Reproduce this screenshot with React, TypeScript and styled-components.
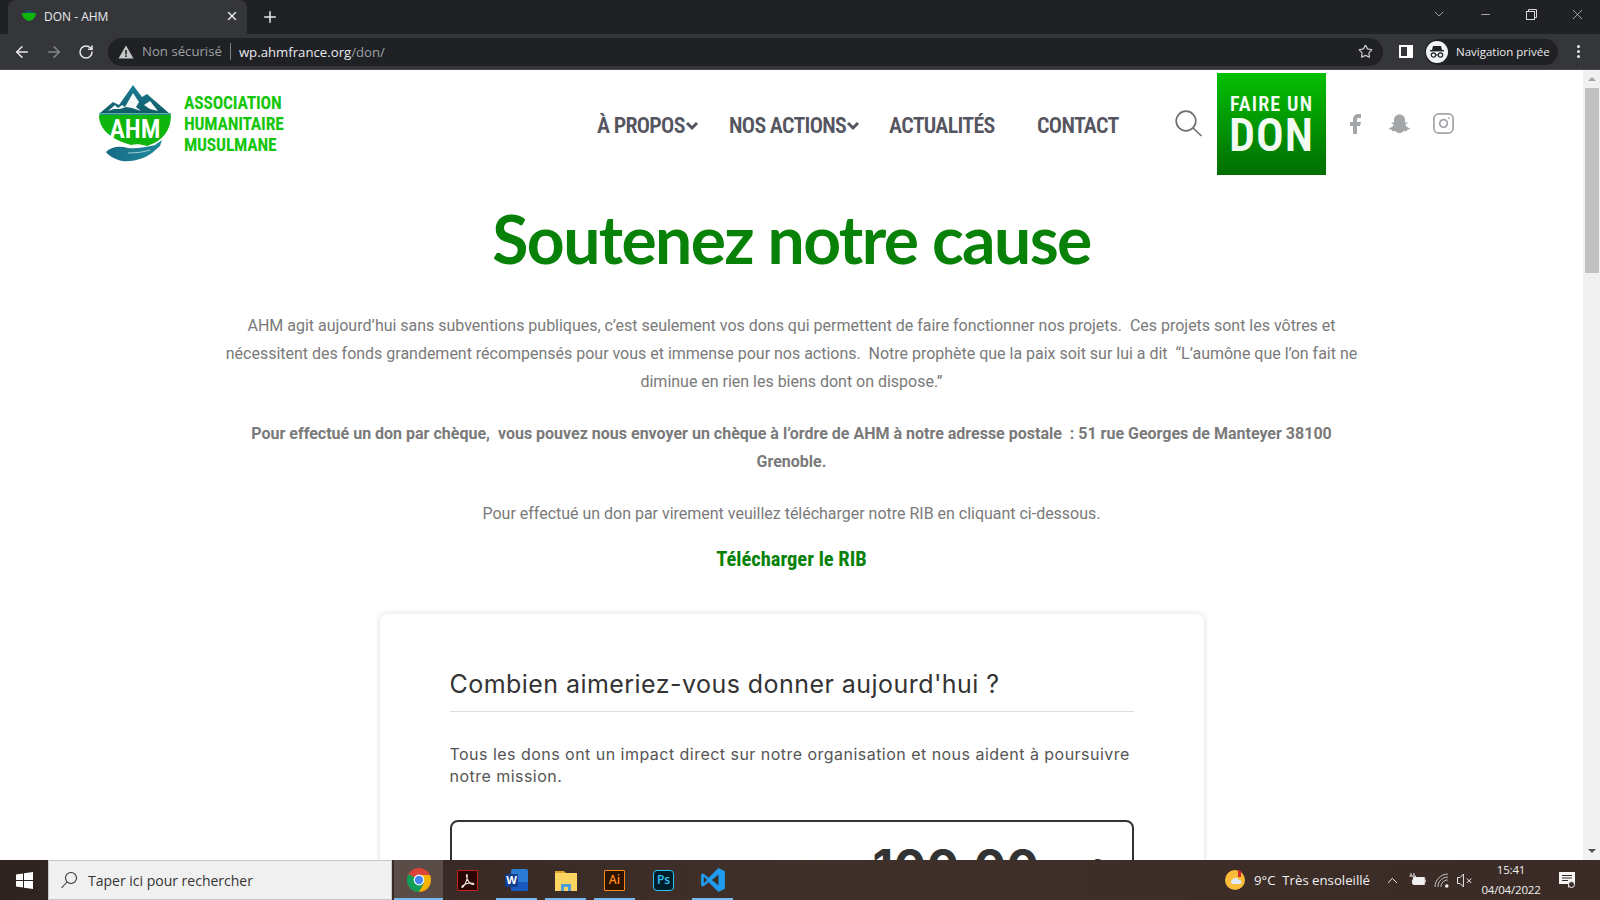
import React from 'react';
import styled, { createGlobalStyle } from 'styled-components';
import { ArrowLeft, ArrowRight, RotateCw, Star, X, Plus, ChevronDown, Minus, Facebook, Instagram, ChevronUp } from 'lucide-react';

const GlobalStyle = createGlobalStyle`
  html, body { margin: 0; padding: 0; height: 100%; overflow: hidden; background: #fff; }
  * { box-sizing: border-box; }
`;

const Screen = styled.div`
  width: 1600px;
  height: 900px;
  display: flex;
  flex-direction: column;
  overflow: hidden;
  font-family: Roboto, "Liberation Sans", sans-serif;
`;

const TabStrip = styled.div`
  height: 34px;
  flex: none;
  display: flex;
  background: #202124;
  padding-left: 8px;
  color: #e8eaed;
`;

const Tab = styled.div`
  width: 239px;
  height: 34px;
  background: #35363a;
  border-radius: 8px 8px 0 0;
  display: flex;
  align-items: center;
  padding: 0 8px 2px 13px;
  font: 12px "Open Sans", sans-serif;
  color: #e8eaed;
`;

const TabTitle = styled.span`
  flex: 1;
  margin-left: 7px;
`;

const NewTab = styled.div`
  margin: 0 0 0 14px;
  display: flex;
  align-items: center;
`;

const WindowControls = styled.div`
  margin-left: auto;
  display: flex;
  align-items: flex-start;
  padding-top: 6px;
  color: #d8d9db;
`;

const WindowButton = styled.div`
  width: 46px;
  height: 16px;
  display: flex;
  align-items: center;
  justify-content: center;
`;

const Toolbar = styled.div`
  height: 36px;
  flex: none;
  background: #35363a;
  display: flex;
  align-items: center;
  padding: 0 10px 0 6px;
  border-bottom: 1px solid #4a4b4f;
  color: #e8eaed;
`;

const NavIcon = styled.div<{ $dim?: boolean }>`
  width: 32px;
  display: flex;
  justify-content: center;
  color: ${(p) => (p.$dim ? '#85868a' : '#e8eaed')};
`;

const Omnibox = styled.div`
  width: 1275px;
  height: 28px;
  margin-left: 6px;
  border-radius: 14px;
  background: #202124;
  display: flex;
  align-items: center;
  padding: 0 10px 0 10px;
  font: 13.2px "Open Sans", sans-serif;
`;

const InsecureLabel = styled.span`
  color: #9aa0a6;
  margin-left: 8px;
  padding-right: 8px;
  border-right: 1px solid #7d7e82;
  line-height: 17px;
`;

const UrlHost = styled.span`
  color: #e8eaed;
  margin-left: 8px;
`;

const UrlPath = styled.span`
  color: #9aa0a6;
`;

const UrlSpacer = styled.span`
  flex: 1;
`;

const SidePanelIcon = styled.div`
  width: 14px;
  height: 13px;
  margin-left: 16px;
  border: 2px solid #fff;
  border-right-width: 6px;
`;

const Profile = styled.div`
  width: 133px;
  height: 26px;
  margin-left: 12px;
  border-radius: 13px;
  background: #202124;
  display: flex;
  align-items: center;
  padding-left: 1px;
  font: 11.5px "Open Sans", sans-serif;
  color: #e8eaed;
`;

const ProfileBadge = styled.div`
  width: 22px;
  height: 22px;
  border-radius: 50%;
  background: #f1f3f4;
  display: flex;
  align-items: center;
  justify-content: center;
  margin-right: 8px;
`;

const MenuDots = styled.div`
  margin-left: 19px;
  display: flex;
  flex-direction: column;
  gap: 2px;
`;

const Dot = styled.span`
  width: 3px;
  height: 3px;
  border-radius: 50%;
  background: #e8eaed;
`;

const Viewport = styled.div`
  flex: 1;
  min-height: 0;
  display: flex;
  overflow: hidden;
  background: #fff;
`;

const Page = styled.main`
  flex: 1;
  min-width: 0;
  display: flex;
  flex-direction: column;
  align-items: center;
  overflow: hidden;
`;

const ScrollBar = styled.div`
  width: 17px;
  flex: none;
  background: #f1f1f1;
  display: flex;
  flex-direction: column;
  align-items: center;
`;

const ScrollArrow = styled.div<{ $down?: boolean }>`
  height: 18px;
  flex: none;
  display: flex;
  align-items: center;
  &::before {
    content: '';
    border-left: 4px solid transparent;
    border-right: 4px solid transparent;
    ${(p) => (p.$down ? 'border-top: 4px solid #505050;' : 'border-bottom: 4px solid #a3a3a3;')}
  }
`;

const ScrollThumb = styled.div`
  width: 14px;
  height: 185px;
  margin-left: 1px;
  background: #c1c1c1;
`;

const ScrollRest = styled.div`
  flex: 1;
`;

const Header = styled.header`
  width: 100%;
  height: 107px;
  flex: none;
  display: flex;
  align-items: flex-start;
  padding-left: 98px;
`;

const Logo = styled.div`
  display: flex;
  align-items: center;
  width: 499px;
  height: 80px;
  margin-top: 14px;
`;

const LogoWords = styled.div`
  margin-left: 12px;
  font: 700 17.5px/21px Roboto, sans-serif;
  font-stretch: 75%;
  letter-spacing: -0.2px;
  color: #16c60c;
`;

const Nav = styled.nav`
  display: flex;
  align-items: center;
  height: 105px;
  padding-top: 6px;
  color: #55555f;
  font: 600 22px Roboto, sans-serif;
  font-stretch: 75%;
  letter-spacing: -0.7px;
`;

const NavItem = styled.a<{ $width: number }>`
  width: ${(p) => p.$width}px;
  display: flex;
  align-items: center;
  white-space: nowrap;
`;

const SearchBox = styled.div`
  height: 105px;
  display: flex;
  align-items: center;
  padding: 2px 0 0 2px;
  width: 44px;
`;

const DonateButton = styled.a`
  width: 109px;
  height: 102px;
  margin-top: 3px;
  background: linear-gradient(#04bf04, #016e01);
  color: #f3fbf3;
  display: flex;
  flex-direction: column;
  align-items: center;
  font-family: Roboto, sans-serif;
  font-stretch: 75%;
  font-weight: 600;
`;

const DonateTop = styled.span`
  font-size: 20px;
  line-height: 24px;
  margin-top: 19px;
  letter-spacing: 1.15px;
`;

const DonateBig = styled.span`
  font-size: 46px;
  line-height: 46px;
  margin-top: -4px;
  letter-spacing: 1px;
`;

const Socials = styled.div`
  height: 105px;
  display: flex;
  align-items: center;
  padding-top: 2px;
  margin-left: 17px;
  gap: 21px;
  color: #a3a6a9;
`;

const Title = styled.h1`
  margin: 24px 0 35px;
  font: 700 66px/76px Lato, sans-serif;
  letter-spacing: -1.6px;
  color: #078107;
`;

const Lead = styled.p<{ $strong?: boolean }>`
  width: 1140px;
  margin: 0 0 24px;
  text-align: center;
  font-size: 16px;
  line-height: 28px;
  color: #7a7a7a;
  font-weight: ${(p) => (p.$strong ? 700 : 400)};
  letter-spacing: ${(p) => (p.$strong ? '0' : '-0.014px')};
`;

const RibLink = styled.a`
  margin: -7px 0 41px;
  font: 700 20.5px/28px Roboto, sans-serif;
  font-stretch: 75%;
  color: #078107;
`;

const Card = styled.section`
  width: 824px;
  flex: none;
  background: #fff;
  border-radius: 8px;
  box-shadow: 0 0 6px rgba(0, 0, 0, 0.14);
  padding: 52px 70px 40px;
`;

const CardTitle = styled.h2`
  margin: 0;
  padding-bottom: 9px;
  border-bottom: 1px solid #ddd;
  font: 400 25px/36px Inter, sans-serif;
  letter-spacing: 0.45px;
  color: #333;
`;

const CardText = styled.p`
  margin: 31px 0 33px;
  font: 400 16px/22px Inter, sans-serif;
  letter-spacing: 0.47px;
  color: #555;
`;

const AmountBox = styled.div`
  height: 84px;
  border: 2px solid #333;
  border-radius: 8px;
  display: flex;
  justify-content: flex-end;
  padding: 17px 28px 0 0;
  font: 700 48px/56px Inter, sans-serif;
  letter-spacing: 0.6px;
  color: #333;
`;

const Currency = styled.span`
  font-size: 20px;
  font-weight: 400;
  margin-left: 50px;
  line-height: 56px;
`;

const Taskbar = styled.footer`
  height: 40px;
  flex: none;
  display: flex;
  align-items: center;
  background: linear-gradient(90deg, #2f2320, #40302a 50%, #3a2b26);
  color: #fff;
`;

const StartButton = styled.div`
  width: 48px;
  display: flex;
  justify-content: center;
`;

const SearchField = styled.div`
  width: 344px;
  height: 40px;
  background: #f0f0f0;
  border: 1px solid #c8c8c8;
  display: flex;
  align-items: center;
  padding-left: 11px;
  color: #333;
  font: 14px "Open Sans", sans-serif;
`;

const SearchHint = styled.span`
  margin-left: 10px;
`;

const TaskIcons = styled.div`
  display: flex;
  margin-left: 2px;
  height: 40px;
`;

const TaskSlot = styled.div<{ $active?: boolean; $open?: boolean }>`
  position: relative;
  width: 49px;
  height: 40px;
  display: flex;
  align-items: center;
  justify-content: center;
  background: ${(p) => (p.$active ? '#5a4d48' : 'transparent')};
  &::after {
    content: '';
    display: ${(p) => (p.$open ? 'block' : 'none')};
    position: absolute;
    left: ${(p) => (p.$active ? '0' : '4px')};
    right: ${(p) => (p.$active ? '0' : '4px')};
    bottom: 0;
    height: 2px;
    background: #76b9ed;
  }
`;

const AppTile = styled.div<{ $bg: string; $fg: string; $round?: boolean }>`
  width: 21px;
  height: 21px;
  border-radius: ${(p) => (p.$round ? '4px' : '1px')};
  background: ${(p) => p.$bg};
  border: 1.5px solid ${(p) => p.$fg};
  color: ${(p) => p.$fg};
  font: 600 12px/18px "Open Sans", sans-serif;
  text-align: center;
  display: flex;
  align-items: center;
  justify-content: center;
`;

const Tray = styled.div`
  margin-left: auto;
  display: flex;
  align-items: center;
  padding-right: 15px;
  font: 13.2px "Open Sans", sans-serif;
  color: #f1f1f1;
`;

const Weather = styled.span`
  margin-left: 8px;
  width: 130px;
  white-space: nowrap;
`;

const TrayIcons = styled.div`
  display: flex;
  align-items: center;
  gap: 8px;
  width: 89px;
`;

const Clock = styled.div`
  width: 76px;
  text-align: center;
  font-size: 11.5px;
  line-height: 20px;
  letter-spacing: -0.2px;
`;

const Notify = styled.div`
  width: 36px;
  display: flex;
  justify-content: center;
`;

const Chevron = () => (
  <svg width="14" height="10" viewBox="0 0 14 10" fill="none" stroke="#55555f" strokeWidth="3">
    <path d="M2 2l5 5 5-5" />
  </svg>
);

const MagnifierIcon = () => (
  <svg width="28" height="27" viewBox="0 0 28 27" fill="none" stroke="#707070" strokeWidth="1.7">
    <circle cx="11" cy="11" r="9.800" />
    <path d="M18 18l8.500 8" />
  </svg>
);

const TaskSearchIcon = () => (
  <svg width="18" height="18" viewBox="0 0 18 18" fill="none" stroke="#333" strokeWidth="1.100">
    <circle cx="11" cy="7" r="5.500" />
    <path d="M7 11l-5.500 6" />
  </svg>
);

const LogoMark = () => (
  <svg width="74" height="80" viewBox="0 0 74 80">
    <defs>
      <linearGradient id="peak" x1="0" y1="0" x2="0" y2="1">
        <stop offset="0" stopColor="#1d7f99" />
        <stop offset="1" stopColor="#0f5a63" />
      </linearGradient>
      <linearGradient id="hand" x1="0" y1="0" x2="1" y2="0">
        <stop offset="0" stopColor="#176a86" />
        <stop offset="1" stopColor="#1f8a9a" />
      </linearGradient>
    </defs>
    <path d="M2 29L15 18l6 3 14-20 9 12 5-3 23 20 1 1H2z" fill="url(#peak)" />
    <path d="M10 27l7-6 3 3 4-3 3 2 8-14 6 9-3 5 5 4-9-3-6-1-6 2-6 0z" fill="#fff" opacity=".95" />
    <path d="M46 21l6-4 8 10-8-2z" fill="#fff" />
    <rect x="1" y="29" width="72" height="1.500" fill="#4fb3a5" />
    <path d="M1 31h72c0 15-8 26-24 31-6-2-12-2-16-1C12 55 1 45 1 31z" fill="#0db50d" />
    <text x="37" y="54" textAnchor="middle" fontFamily="Roboto, sans-serif" fontWeight="600" fontSize="26" fill="#fff" style={{ fontStretch: '75%' }}>AHM</text>
    <path d="M8 68c6-6 14-6 22-4 8 1 18-1 27-3l7-5-2 6-8 7c-8 6-20 9-30 8-8-2-13-5-16-9z" fill="url(#hand)" />
    <path d="M30 69c8 0 16-1 22-3" fill="none" stroke="#bfe3e6" strokeWidth=".8" />
  </svg>
);

const Snapchat = () => (
  <svg width="23" height="22" viewBox="0 0 24 24" fill="#a3a6a9">
    <path d="M12 1.500c3.600 0 6 2.600 6 6v3l2-.5c.8 0 1 .9.4 1.300l-2 1.200c.5 1.900 2.200 3.300 4.600 4 .5.200.4.900-.1 1.100l-2.400.7-.5 1.500-2.400-.2c-1.700 0-2.600 2.400-5.600 2.400s-3.900-2.400-5.600-2.400l-2.400.2-.5-1.500-2.400-.7c-.5-.2-.6-.9-.1-1.100 2.400-.7 4.100-2.100 4.600-4l-2-1.200c-.6-.4-.4-1.300.4-1.300l2 .5v-3c0-3.400 2.400-6 6-6z" />
  </svg>
);

const Incognito = () => (
  <svg width="18" height="18" viewBox="0 0 18 18" fill="#202124">
    <path d="M5 3h8l1 4H4z" />
    <rect x="2" y="7" width="14" height="1.400" />
    <circle cx="5.500" cy="12" r="2.200" fill="none" stroke="#202124" strokeWidth="1.200" />
    <circle cx="12.500" cy="12" r="2.200" fill="none" stroke="#202124" strokeWidth="1.200" />
    <path d="M7.500 11.500h3v1h-3z" />
  </svg>
);

const WarningIcon = () => (
  <svg width="16" height="14" viewBox="0 0 16 14">
    <path d="M8 0.500L15.500 13.500H0.500z" fill="#c4c7c5" />
    <path d="M7.200 5h1.600v4.500H7.200zM7.200 10.300h1.600v1.600H7.200z" fill="#202124" />
  </svg>
);

const WindowsLogo = () => (
  <svg width="17" height="17" viewBox="0 0 17 17" fill="#fff">
    <path d="M0 2.500l7-1v6.500H0zM8 1.300L17 0v8H8zM0 9h7v6.500l-7-1zM8 9h9v8l-9-1.300z" />
  </svg>
);

const ChromeLogo = () => (
  <svg width="24" height="24" viewBox="0 0 24 24">
    <circle cx="12" cy="12" r="12" fill="#db4437" />
    <path d="M12 12L1.600 6A12 12 0 0 0 12 24l5.200-9z" fill="#0f9d58" />
    <path d="M12 7h10.900A12 12 0 0 1 12 24l5-9z" fill="#f4b400" />
    <circle cx="12" cy="12" r="5.400" fill="#fff" />
    <circle cx="12" cy="12" r="4.200" fill="#4285f4" />
  </svg>
);

const AcrobatGlyph = () => (
  <svg width="15" height="15" viewBox="0 0 15 15" fill="none" stroke="#f3e6e4" strokeWidth="1.100">
    <path d="M7 1.500c-.8 0-.6 2.500.5 5s3 4.500 5.500 5c1 .2 1.200-.9 0-1.200-3.500-.6-8 .4-10.500 2.700-1.300 1.200-.3 1.800.6.800C5.500 11.500 8 5 7 1.500z" />
  </svg>
);

const WordLogo = () => (
  <svg width="24" height="24" viewBox="0 0 24 24">
    <rect x="6" y="1" width="17" height="22" rx="2" fill="#2b7cd3" />
    <rect x="6" y="14" width="17" height="9" rx="1" fill="#185abd" />
    <rect x="0" y="6" width="13" height="13" rx="1" fill="#103f91" />
    <text x="6.500" y="16" textAnchor="middle" fontSize="11" fontWeight="700" fill="#fff" fontFamily="Open Sans, sans-serif">W</text>
  </svg>
);

const FolderLogo = () => (
  <svg width="24" height="24" viewBox="0 0 24 24">
    <path d="M1 3h9l2 2H1z" fill="#e0a526" />
    <rect x="1" y="5" width="22" height="18" fill="#fcd462" />
    <rect x="7" y="16" width="10" height="7" fill="#4a9fd8" />
    <rect x="10" y="19" width="4" height="4" fill="#fcd462" />
  </svg>
);

const VsCodeLogo = () => (
  <svg width="26" height="26" viewBox="0 0 24 24">
    <path d="M17 1l6 3v16l-6 3-9-9-5 4-2-1V7l2-1 5 4z" fill="#1f9cf0" />
    <path d="M17 7l-6 5 6 5z" fill="#3a2c26" />
    <path d="M3.500 9l3 3-3 3z" fill="#3a2c26" />
  </svg>
);

const WeatherIcon = () => (
  <svg width="22" height="22" viewBox="0 0 22 22">
    <circle cx="11" cy="11" r="10" fill="#f9bd3a" />
    <path d="M14 1l3 1 0 6-3 0z" fill="#d9272e" />
    <path d="M8 15a3 3 0 0 1 1-5 3.500 3.500 0 0 1 6 1 2 2 0 0 1 1 4z" fill="#dfe9f3" />
  </svg>
);

const BatteryPlug = () => (
  <svg width="17" height="14" viewBox="0 0 17 14" fill="none" stroke="#f1f1f1" strokeWidth="1">
    <rect x="4.500" y="4.500" width="11" height="7" fill="#f1f1f1" />
    <path d="M16.500 6.500v3" />
    <path d="M2 0v3M5 0v3M0.500 3h6v1.500L3.500 7v4" />
  </svg>
);

const WifiFan = () => (
  <svg width="16" height="15" viewBox="0 0 16 15" fill="none" stroke="#c9c6c4" strokeWidth="1">
    <path d="M1 14C1 7 7 1 14 1M4 14c0-5.500 4.500-10 10-10M7 14c0-3.900 3.100-7 7-7" />
    <circle cx="13" cy="13" r="1.800" fill="#f1f1f1" stroke="none" />
  </svg>
);

const MutedSpeaker = () => (
  <svg width="16" height="15" viewBox="0 0 16 15" fill="none" stroke="#f1f1f1" strokeWidth="1">
    <path d="M6.500 1v13L3 10.500H.5v-6H3z" />
    <path d="M10 5.500l4.500 4.500M14.500 5.500L10 10" />
  </svg>
);

const NotifyBubble = () => (
  <svg width="18" height="18" viewBox="0 0 18 18">
    <path d="M1 1h16v12h-4l-3 4v-4H1z" fill="#f4f4f4" />
    <path d="M4 4.500h10M4 7h10M4 9.500h6" stroke="#3a2b26" strokeWidth="1" />
    <circle cx="13.500" cy="13.500" r="3" fill="#3a2b26" stroke="#f4f4f4" />
  </svg>
);

export default function App() {
  return (
    <Screen>
      <GlobalStyle />
      <TabStrip>
        <Tab>
          <svg width="16" height="12" viewBox="0 0 16 12">
            <path d="M1 3h14c0 4-3 7-7 8-4-1-7-4-7-8z" fill="#0db50d" />
            <path d="M3 3l5-3 5 3z" fill="#0f5a63" />
          </svg>
          <TabTitle>DON - AHM</TabTitle>
          <X size={14} strokeWidth={2.4} />
        </Tab>
        <NewTab>
          <Plus size={18} strokeWidth={2} />
        </NewTab>
        <WindowControls>
          <WindowButton>
            <ChevronDown size={16} strokeWidth={1} />
          </WindowButton>
          <WindowButton>
            <Minus size={13} strokeWidth={1.4} />
          </WindowButton>
          <WindowButton>
            <svg width="11" height="11" viewBox="0 0 11 11" fill="none" stroke="#d8d9db">
              <rect x="0.500" y="2.500" width="8" height="8" />
              <path d="M2.500 2.500v-2h8v8h-2" />
            </svg>
          </WindowButton>
          <WindowButton>
            <X size={17} strokeWidth={1} />
          </WindowButton>
        </WindowControls>
      </TabStrip>

      <Toolbar>
        <NavIcon>
          <ArrowLeft size={18} strokeWidth={2} />
        </NavIcon>
        <NavIcon $dim>
          <ArrowRight size={18} strokeWidth={2} />
        </NavIcon>
        <NavIcon>
          <RotateCw size={16} strokeWidth={2.2} />
        </NavIcon>
        <Omnibox>
          <WarningIcon />
          <InsecureLabel>Non sécurisé</InsecureLabel>
          <UrlHost>wp.ahmfrance.org</UrlHost>
          <UrlPath>/don/</UrlPath>
          <UrlSpacer />
          <Star size={15} color="#c5c6c8" />
        </Omnibox>
        <SidePanelIcon />
        <Profile>
          <ProfileBadge>
            <Incognito />
          </ProfileBadge>
          Navigation privée
        </Profile>
        <MenuDots>
          <Dot />
          <Dot />
          <Dot />
        </MenuDots>
      </Toolbar>

      <Viewport>
        <Page>
          <Header>
            <Logo>
              <LogoMark />
              <LogoWords>
                ASSOCIATION
                <br />
                HUMANITAIRE
                <br />
                MUSULMANE
              </LogoWords>
            </Logo>
            <Nav>
              <NavItem $width={132}>
                À PROPOS
                <Chevron />
              </NavItem>
              <NavItem $width={160}>
                NOS ACTIONS
                <Chevron />
              </NavItem>
              <NavItem $width={148}>ACTUALITÉS</NavItem>
              <NavItem $width={136}>CONTACT</NavItem>
            </Nav>
            <SearchBox>
              <MagnifierIcon />
            </SearchBox>
            <DonateButton>
              <DonateTop>FAIRE UN</DonateTop>
              <DonateBig>DON</DonateBig>
            </DonateButton>
            <Socials>
              <Facebook size={24} fill="#a3a6a9" strokeWidth={0} />
              <Snapchat />
              <Instagram size={23} strokeWidth={1.8} />
            </Socials>
          </Header>

          <Title>Soutenez notre cause</Title>

          <Lead>
            AHM agit aujourd’hui sans subventions publiques, c’est seulement vos dons qui permettent de faire fonctionner nos projets.&nbsp; Ces projets sont les vôtres et nécessitent des fonds grandement récompensés pour vous et immense pour nos actions.&nbsp; Notre prophète que la paix soit sur lui a dit &nbsp;“L’aumône que l’on fait ne diminue en rien les biens dont on dispose.”
          </Lead>
          <Lead $strong>
            Pour effectué un don par chèque,&nbsp; vous pouvez nous envoyer un chèque à l’ordre de AHM à notre adresse postale &nbsp;: 51 rue Georges de Manteyer 38100 Grenoble.
          </Lead>
          <Lead>Pour effectué un don par virement veuillez télécharger notre RIB en cliquant ci-dessous.</Lead>
          <RibLink>Télécharger le RIB</RibLink>

          <Card>
            <CardTitle>Combien aimeriez-vous donner aujourd'hui ?</CardTitle>
            <CardText>Tous les dons ont un impact direct sur notre organisation et nous aident à poursuivre notre mission.</CardText>
            <AmountBox>
              100,00
              <Currency>€</Currency>
            </AmountBox>
          </Card>
        </Page>
        <ScrollBar>
          <ScrollArrow />
          <ScrollThumb />
          <ScrollRest />
          <ScrollArrow $down />
        </ScrollBar>
      </Viewport>

      <Taskbar>
        <StartButton>
          <WindowsLogo />
        </StartButton>
        <SearchField>
          <TaskSearchIcon />
          <SearchHint>Taper ici pour rechercher</SearchHint>
        </SearchField>
        <TaskIcons>
          <TaskSlot $active $open>
            <ChromeLogo />
          </TaskSlot>
          <TaskSlot>
            <AppTile $bg="#2a0604" $fg="#c5221c">
              <AcrobatGlyph />
            </AppTile>
          </TaskSlot>
          <TaskSlot $open>
            <WordLogo />
          </TaskSlot>
          <TaskSlot $open>
            <FolderLogo />
          </TaskSlot>
          <TaskSlot $open>
            <AppTile $bg="#2b1300" $fg="#ff8a1c">Ai</AppTile>
          </TaskSlot>
          <TaskSlot>
            <AppTile $bg="#001d2b" $fg="#31c5f4" $round>Ps</AppTile>
          </TaskSlot>
          <TaskSlot $open>
            <VsCodeLogo />
          </TaskSlot>
        </TaskIcons>
        <Tray>
          <WeatherIcon />
          <Weather>9°C&nbsp; Très ensoleillé</Weather>
          <TrayIcons>
            <ChevronUp size={17} strokeWidth={1.4} />
            <BatteryPlug />
            <WifiFan />
            <MutedSpeaker />
          </TrayIcons>
          <Clock>
            15:41
            <br />
            04/04/2022
          </Clock>
          <Notify>
            <NotifyBubble />
          </Notify>
        </Tray>
      </Taskbar>
    </Screen>
  );
}
